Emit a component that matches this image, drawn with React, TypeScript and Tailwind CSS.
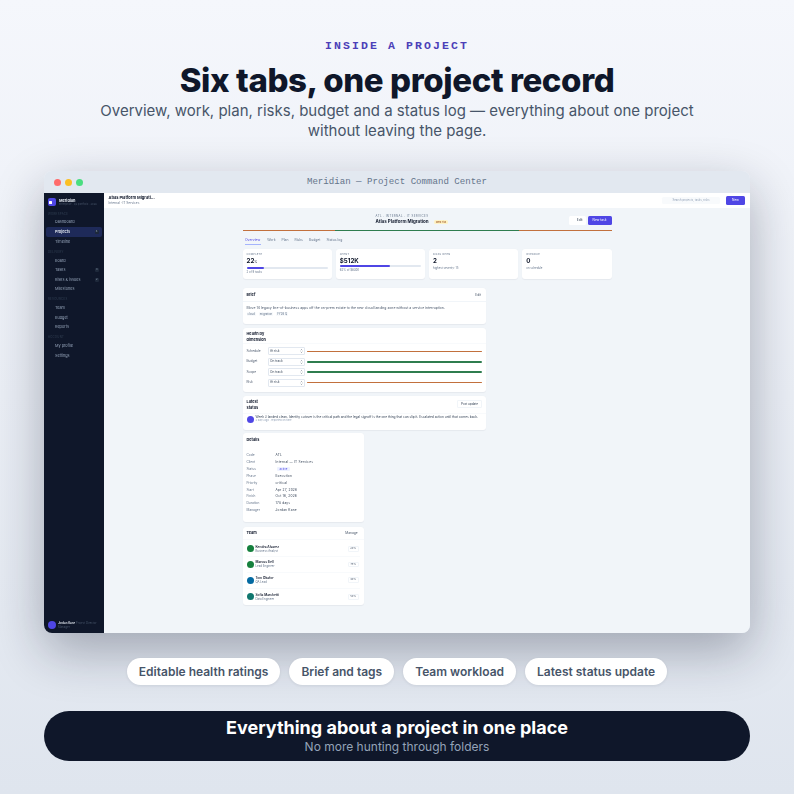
const sans = "font-['Inter','Liberation_Sans',sans-serif]";

const navGroups = [
  { label: "WORKSPACE", items: [["Dashboard"], ["Projects", "6", true], ["Timeline"]] },
  { label: "DELIVERY", items: [["Board"], ["Tasks", "3"], ["Risks & issues", "2"], ["Milestones"]] },
  { label: "RESOURCES", items: [["Team"], ["Budget"], ["Reports"]] },
  { label: "ACCOUNT", items: [["My profile"], ["Settings"]] },
] as { label: string; items: [string, string?, boolean?][] }[];

const kpis = [
  { label: "COMPLETE", value: "22", unit: "%", bar: 22, note: "2 of 9 tasks" },
  { label: "SPENT", value: "$512K", bar: 62, note: "62% of $830K" },
  { label: "RISKS OPEN", value: "2", note: "highest severity: 15" },
  { label: "OVERDUE", value: "0", note: "on schedule" },
];

const health = [
  ["Schedule", "At risk", "bg-[#c2703d]"],
  ["Budget", "On track", "bg-[#2f7d4f]"],
  ["Scope", "On track", "bg-[#2f7d4f]"],
  ["Risk", "At risk", "bg-[#c2703d]"],
];

const details = [
  ["Code", "ATL"],
  ["Client", "Internal — IT Services"],
  ["Status", "active"],
  ["Phase", "Execution"],
  ["Priority", "critical"],
  ["Start", "Apr 27, 2026"],
  ["Finish", "Oct 16, 2026"],
  ["Duration", "178 days"],
  ["Manager", "Jordan Kane"],
];

const team = [
  ["Kendra Alvarez", "Business Analyst", "20%", "bg-[#15803d]"],
  ["Marcus Bell", "Lead Engineer", "75%", "bg-[#15803d]"],
  ["Tom Okafor", "QA Lead", "40%", "bg-[#0369a1]"],
  ["Sofia Marchetti", "Data Engineer", "50%", "bg-[#0f766e]"],
];

function Sidebar() {
  return (
    <aside className="w-[59.5px] shrink-0 bg-[#0f172a] flex flex-col rounded-bl-[8px]">
      <div className="flex items-center gap-[3px] pl-[4px] pt-[4px] h-[14px]">
        <div className="w-[8px] h-[8px] rounded-[2px] bg-[#4f46e5] flex items-center pl-[1px]">
          <div className="w-[3px] h-[3px] bg-white rounded-[0.5px]" />
        </div>
        <div>
          <div className="text-[3.8px] leading-[5px] font-bold text-[#e2e8f0]">Meridian</div>
          <div className="text-[2.6px] leading-[3px] text-[#475569] whitespace-nowrap">Enterprise · Q2 portfolio · 2026</div>
        </div>
      </div>
      <div className="flex flex-col pt-[2px]">
        {navGroups.map((g) => (
          <div key={g.label} className="pt-[1.5px] pb-[0.8px]">
            <div className="text-[2.8px] leading-[7px] tracking-[0.3px] text-[#334155] pl-[4px]">{g.label}</div>
            {g.items.map(([name, badge, active]) => (
              <div
                key={name}
                className={`h-[9.6px] mx-[2px] pl-[9px] pr-[3px] flex items-center justify-between rounded-[2px] text-[3.8px] ${
                  active ? "bg-[#1e2a59] text-[#e2e8f0] font-semibold" : "text-[#94a3b8]"
                }`}
              >
                <span>{name}</span>
                {badge && <span className="text-[2.6px] text-[#94a3b8] bg-[#1e293b] px-[1px] rounded-[1px]">{badge}</span>}
              </div>
            ))}
          </div>
        ))}
      </div>
      <div className="mt-auto flex items-center gap-[2px] pl-[4px] pb-[4px]">
        <div className="w-[8px] h-[8px] rounded-full bg-[#4f46e5] shrink-0" />
        <div className="text-[2.8px] leading-[4px] text-[#475569]">
          <span className="font-semibold text-[#e2e8f0]">Jordan Kane</span> Project Director
          <div>Manager</div>
        </div>
      </div>
    </aside>
  );
}

function Card({ className = "", children }: { className?: string; children: React.ReactNode }) {
  return <div className={`bg-white rounded-[3px] shadow-[0_0.5px_1px_rgba(15,23,42,0.05)] ${className}`}>{children}</div>;
}

function Main() {
  return (
    <div className="flex-1 flex flex-col bg-[#f1f5f9] min-w-0 rounded-br-[8px]">
      <div className="h-[15px] bg-white flex items-center justify-between pl-[5px] pr-[5px] shrink-0">
        <div className="-mt-[1px]">
          <div className="text-[4px] leading-[6px] font-bold text-[#0f172a]">Atlas Platform Migrati…</div>
          <div className="text-[3.2px] leading-[4px] text-[#64748b]">Internal · IT Services</div>
        </div>
        <div className="flex items-center gap-[6px]">
          <div className="w-[58px] h-[7px] rounded-[1.5px] bg-[#f8fafc] text-[2.8px] leading-[7px] text-center text-[#94a3b8]">Search projects, tasks, risks</div>
          <div className="w-[19px] h-[9px] rounded-[1.5px] bg-[#4f46e5] text-white text-[3.2px] leading-[9px] text-center">New</div>
        </div>
      </div>

      <div className="w-[369px] ml-[139px] flex flex-col">
        <div className="h-[22px] flex items-start pt-[7px] pl-[133px]">
          <div className="flex-1 -mt-[0.5px]">
            <div className="text-[2.8px] leading-[3.5px] tracking-[0.45px] text-[#64748b]">ATL · INTERNAL · IT SERVICES</div>
            <div className="flex items-center gap-[5px]">
              <span className="text-[4.5px] leading-[7px] font-bold text-[#0f172a]">Atlas Platform Migration</span>
              <span className="text-[2.6px] leading-[4px] px-[2px] rounded-[1.5px] bg-[#fef3c7] text-[#92400e]">Med risk</span>
            </div>
          </div>
          <div className="flex gap-[2px] pt-[1px]">
            <div className="w-[17px] h-[9px] rounded-[1.5px] bg-white text-[3.2px] leading-[9px] text-right pr-[3px] text-[#334155]">Edit</div>
            <div className="w-[24px] h-[9px] rounded-[1.5px] bg-[#4f46e5] text-white text-[3.2px] leading-[9px] text-center">New task</div>
          </div>
        </div>

        <div className="flex h-[1.3px]">
          <div className="w-[92.5px] bg-[#c2703d]" />
          <div className="w-[184px] bg-[#2f7d4f]" />
          <div className="w-[92.5px] bg-[#c2703d]" />
        </div>

        <div className="flex gap-[6px] mt-[7px] h-[7px] text-[3.4px] leading-[5px] text-[#64748b] pl-[2.5px]">
          {["Overview", "Work", "Plan", "Risks", "Budget", "Status log"].map((t, i) => (
            <span key={t} className={i === 0 ? "text-[#4f46e5] border-b-[0.5px] border-[#a5b4fc] pr-[1px] h-[6.5px]" : ""}>{t}</span>
          ))}
        </div>

        <div className="grid grid-cols-4 gap-[4px] mt-[4px]">
          {kpis.map((k) => (
            <Card key={k.label} className="h-[30px] px-[4px] pt-[4px]">
              <div className="text-[2.6px] leading-[3px] tracking-[0.2px] text-[#64748b]">{k.label}</div>
              <div className="text-[6.2px] leading-[9px] font-bold text-[#0f172a]">
                {k.value}
                {k.unit && <span className="text-[3px] font-normal">{k.unit}</span>}
              </div>
              {k.bar !== undefined && (
                <div className="h-[1.5px] bg-[#e2e8f0] rounded-full">
                  <div className="h-full bg-[#4f46e5] rounded-full" style={{ width: `${k.bar}%` }} />
                </div>
              )}
              <div className="text-[2.8px] leading-[6px] text-[#64748b]">{k.note}</div>
            </Card>
          ))}
        </div>

        <div className="w-[243.5px] mt-[9px] flex flex-col gap-[4px]">
          <Card className="h-[36px]">
            <div className="flex justify-between items-center h-[14px] px-[4px] pt-[1px] border-b-[0.5px] border-[#f1f5f9]">
              <span className="text-[3.8px] font-bold text-[#0f172a]">Brief</span>
              <span className="text-[3.2px] text-[#475569] pr-[1px]">Edit</span>
            </div>
            <div className="px-[4px] pt-[4px] text-[3.45px] leading-[5px] text-[#475569] whitespace-nowrap">
              Move 14 legacy line-of-business apps off the on-prem estate to the new cloud landing zone without a service interruption.
            </div>
            <div className="flex gap-[3px] px-[4px] pt-[1px] text-[2.8px] leading-[4px] text-[#64748b]">
              <span className="bg-[#f8fafc] px-[1px]">cloud</span>
              <span className="bg-[#f8fafc] px-[1px]">migration</span>
              <span className="bg-[#f8fafc] px-[1px]">FY26 Q</span>
            </div>
          </Card>

          <Card className="h-[64px]">
            <div className="h-[16px] px-[4px] pt-[3px] text-[3.8px] leading-[5.5px] font-bold text-[#0f172a] border-b-[0.5px] border-[#f8fafc]">
              Health by<br />dimension
            </div>
            <div className="px-[4px] pt-[3px] flex flex-col gap-[2.2px]">
              {health.map(([name, status, color]) => (
                <div key={name} className="flex items-center h-[8.2px]">
                  <span className="w-[21px] text-[3.2px] text-[#475569]">{name}</span>
                  <div className="w-[37px] h-[8px] flex items-center justify-between bg-white border-[0.5px] border-[#e2e8f0] rounded-[1px] pl-[1.5px] text-[3.2px] text-[#334155]">
                    <span>{status}</span>
                    <svg viewBox="0 0 4 8" className="w-[3px] h-[6px] text-[#334155] mr-[0.5px]" fill="none" stroke="currentColor" strokeWidth="0.6">
                      <path d="M1 3 2 2 3 3M1 5 2 6 3 5" />
                    </svg>
                  </div>
                  <div className={`flex-1 h-[1.7px] rounded-full ml-[2px] ${color}`} />
                </div>
              ))}
            </div>
          </Card>

          <Card className="h-[34px]">
            <div className="flex justify-between h-[18px] px-[4px] pt-[3px] border-b-[0.5px] border-[#f8fafc]">
              <div className="text-[3.8px] leading-[5.5px] font-bold text-[#0f172a]">Latest<br />status</div>
              <div className="w-[25px] h-[8px] mt-[1px] rounded-[1px] border-[0.5px] border-[#f1f5f9] text-[3px] leading-[7px] text-center text-[#334155]">Post update</div>
            </div>
            <div className="flex items-center gap-[2px] px-[4px] pt-[1px]">
              <div className="w-[7px] h-[7px] rounded-full bg-[#4f46e5] shrink-0" />
              <div className="whitespace-nowrap">
                <div className="text-[3.2px] leading-[4px] text-[#334155]">Week 3 landed clean. Identity cutover is the critical path and the legal signoff is the one thing that can slip it. Escalated action until that comes back.</div>
                <div className="text-[2.6px] leading-[3.5px] text-[#94a3b8]">2 days ago · reported on time</div>
              </div>
            </div>
          </Card>
        </div>

        <div className="w-[121px] flex flex-col mt-[3px] gap-[5px]">
          <Card className="h-[89px]">
            <div className="h-[13px] px-[4px] pt-[3.5px] text-[3.8px] leading-[5px] font-bold text-[#0f172a]">Details</div>
            <div className="px-[4px] pt-[5.5px] flex flex-col">
              {details.map(([k, v]) => (
                <div key={k} className="flex h-[6.95px] items-center text-[3.2px]">
                  <span className="w-[29px] text-[#64748b]">{k}</span>
                  {k === "Status" ? (
                    <span className="text-[2.8px] px-[3px] ml-[1px] bg-[#eef2ff] text-[#4f46e5] rounded-[1px]">{v}</span>
                  ) : (
                    <span className="text-[#334155] tracking-[0.2px]">{v}</span>
                  )}
                </div>
              ))}
            </div>
          </Card>

          <Card className="h-[78px]">
            <div className="h-[13px] flex items-center justify-between px-[4px] pr-[6px] border-b-[0.5px] border-[#f8fafc]">
              <span className="text-[3.8px] font-bold text-[#0f172a]">Team</span>
              <span className="text-[3.2px] text-[#475569]">Manage</span>
            </div>
            <div className="flex flex-col px-[4px] pt-[1px]">
              {team.map(([name, role, pct, color]) => (
                <div key={name} className="h-[15.8px] flex items-center gap-[2px] border-b-[0.5px] border-[#f8fafc] last:border-b-0">
                  <div className={`w-[7px] h-[7px] rounded-full shrink-0 ${color}`} />
                  <div className="flex-1">
                    <div className="text-[3.2px] leading-[4px] font-semibold text-[#0f172a]">{name}</div>
                    <div className="text-[2.8px] leading-[4px] text-[#64748b]">{role}</div>
                  </div>
                  <span className="text-[2.6px] text-[#475569] border-[0.5px] border-[#f1f5f9] rounded-[1px] px-[1.5px] mr-[1px]">{pct}</span>
                </div>
              ))}
            </div>
          </Card>
        </div>
      </div>
    </div>
  );
}

export default function App() {
  return (
    <div className={`${sans} w-[794px] h-[794px] overflow-hidden bg-gradient-to-b from-[#f5f7fc] to-[#dfe5ee] flex flex-col items-center`}>
      <div className="mt-[39px] font-['Liberation_Mono',monospace] text-[11.5px] leading-[14px] tracking-[2.1px] font-bold text-[#4c3fb8]">INSIDE A PROJECT</div>
      <h1 className="mt-[5px] text-[33px] leading-[44px] font-extrabold tracking-[-0.4px] text-[#0f172a]">Six tabs, one project record</h1>
      <p className="text-center text-[15px] leading-[20px] text-[#475569] mt-[-1px]">
        Overview, work, plan, risks, budget and a status log — everything about one project
        <br />
        without leaving the page.
      </p>

      <div className="mt-[30px] w-[706px] h-[462px] rounded-[8px] flex flex-col shrink-0 shadow-[0_18px_50px_rgba(15,23,42,0.32)]">
        <div className="h-[22px] bg-[#e2e8f0] rounded-t-[8px] flex items-center px-[10px] relative shrink-0">
          <div className="flex gap-[4px] w-[32px]">
            <span className="w-[7px] h-[7px] rounded-full bg-[#ff6b6b] shrink-0" />
            <span className="w-[7px] h-[7px] rounded-full bg-[#fbbf24] shrink-0" />
            <span className="w-[7px] h-[7px] rounded-full bg-[#4ade80] shrink-0" />
          </div>
          <span className="flex-1 text-center pr-[32px] font-['Liberation_Mono',monospace] text-[9.1px] text-[#64748b]">Meridian — Project Command Center</span>
        </div>
        <div className="flex-1 flex min-h-0 blur-[0.3px]">
          <Sidebar />
          <Main />
        </div>
      </div>

      <div className="mt-[25px] flex gap-[9px] text-[12px] font-semibold text-[#475569]">
        {["Editable health ratings", "Brief and tags", "Team workload", "Latest status update"].map((t) => (
          <span key={t} className="h-[27px] px-[12px] leading-[27px] bg-white rounded-full shadow-[0_1px_3px_rgba(15,23,42,0.08)]">{t}</span>
        ))}
      </div>

      <div className="mt-[26px] w-[706px] h-[50px] rounded-full bg-[#0f172a] flex flex-col items-center justify-center shrink-0">
        <div className="text-[18px] leading-[22px] font-bold text-white -mt-[1px]">Everything about a project in one place</div>
        <div className="text-[12px] leading-[15px] text-[#94a3b8]">No more hunting through folders</div>
      </div>
    </div>
  );
}
